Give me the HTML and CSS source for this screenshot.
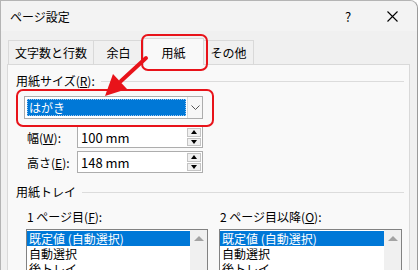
FILE: index.html
```html
<!DOCTYPE html>
<html lang="ja">
<head>
  <meta charset="UTF-8" />
  <title>ページ設定</title>
  <link rel="stylesheet" href="styles.css">
</head>
<body>

  <div class="dialog">
    <div class="titlebar">
      <span class="title">ページ設定</span>
      <span class="help">?</span>
      <span class="close">
        <svg width="11" height="11" viewBox="0 0 11 11"><path d="M0.5 0.5 L10.5 10.5 M10.5 0.5 L0.5 10.5" stroke="#000" stroke-width="1.1" fill="none" /></svg>
      </span>
    </div>

    <div class="cuerpo">
      <div class="tabs">
        <div class="tab tab_ancho">文字数と行数</div>
        <div class="tab">余白</div>
        <div class="tab activa">用紙</div>
        <div class="tab">その他</div>
      </div>

      <div class="panel">
        <div class="grupo">用紙サイズ(<u>R</u>):</div>

        <div class="combo">
          <div class="combo_valor"><span>はがき</span></div>
          <div class="combo_boton">
            <svg width="9" height="5" viewBox="0 0 9 5"><path d="M0.5 0.5 L4.5 4.5 L8.5 0.5" stroke="#555" fill="none" /></svg>
          </div>
        </div>

        <div class="fila">
          <label>幅(<u>W</u>):</label>
          <div class="entrada">
            <span>100 mm</span>
            <div class="giro">
              <div class="giro_btn"><i class="arriba"></i></div>
              <div class="giro_btn"><i class="abajo"></i></div>
            </div>
          </div>
        </div>

        <div class="fila">
          <label>高さ(<u>E</u>):</label>
          <div class="entrada">
            <span>148 mm</span>
            <div class="giro">
              <div class="giro_btn"><i class="arriba"></i></div>
              <div class="giro_btn"><i class="abajo"></i></div>
            </div>
          </div>
        </div>

        <div class="grupo grupo_bandeja">用紙トレイ</div>

        <div class="bandejas">
          <div class="bandeja">
            <div class="bandeja_titulo">1 ページ目(<u>F</u>):</div>
            <div class="lista">
              <div class="lista_items">
                <div class="item elegido">既定値 (自動選択)</div>
                <div class="item">自動選択</div>
                <div class="item">後トレイ</div>
              </div>
              <div class="barra"><i class="barra_flecha"></i></div>
            </div>
          </div>
          <div class="bandeja">
            <div class="bandeja_titulo">2 ページ目以降(<u>O</u>):</div>
            <div class="lista">
              <div class="lista_items">
                <div class="item elegido">既定値 (自動選択)</div>
                <div class="item">自動選択</div>
                <div class="item">後トレイ</div>
              </div>
              <div class="barra"><i class="barra_flecha"></i></div>
            </div>
          </div>
        </div>
      </div>
    </div>

    <svg class="marcas" width="419" height="270" viewBox="0 0 419 270">
      <rect x="142" y="35" width="65" height="35" rx="6" fill="none" stroke="#e8131a" stroke-width="2" />
      <rect x="17" y="90" width="196" height="36" rx="6" fill="none" stroke="#e8131a" stroke-width="2" />
      <line x1="146" y1="58" x2="121" y2="81" stroke="#e8131a" stroke-width="4" stroke-linecap="round" />
      <polygon points="105,96 113,74 127,89" fill="#e8131a" />
    </svg>
  </div>

</body>
</html>
```

FILE: styles.css
```css
* {
  box-sizing: border-box;
}

body {
  margin: 0;
  padding: 0;
  width: 419px;
  height: 270px;
  overflow: hidden;
  background: #ffffff;
  font-family: "Noto Sans CJK JP", "Noto Sans", sans-serif;
  font-size: 12px;
  color: #000;
}

.dialog {
  position: relative;
  width: 418px;
  height: 280px;
  background: #f0f0f0;
  border-left: 1px solid #b4b4b4;
  border-top: 1px solid #b4b4b4;
  border-right: 1px solid #9a9a9a;
  border-top-right-radius: 8px;
}

.titlebar {
  display: flex;
  align-items: center;
  height: 30px;
  padding-left: 9px;
  background: #f3f3f3;
  border-top-right-radius: 8px;
}

.title {
  flex: 1;
}

.help {
  width: 12px;
  margin-right: 33px;
  font-size: 13px;
  text-align: center;
}

.close {
  display: flex;
  margin-right: 19px;
}

.cuerpo {
  padding-left: 6px;
}

.tabs {
  display: flex;
  align-items: flex-end;
  height: 33px;
  padding-left: 1px;
}

.tab {
  display: flex;
  align-items: center;
  justify-content: center;
  width: 51px;
  height: 24px;
  margin-left: -1px;
  background: #f0f0f0;
  border: 1px solid #d9d9d9;
  border-bottom: none;
}

.tab_ancho {
  width: 86px;
  margin-left: 0;
}

.tab.activa {
  position: relative;
  z-index: 1;
  width: 61px;
  height: 27px;
  margin-bottom: -1px;
  background: #f9f9f9;
}

.panel {
  width: 403px;
  height: 220px;
  padding-left: 8px;
  background: #f9f9f9;
  border: 1px solid #d9d9d9;
}

.grupo {
  display: flex;
  align-items: center;
  margin-top: 8px;
  line-height: 16px;
}

.grupo::after {
  content: "";
  flex: 1;
  height: 1px;
  margin: 0 5px 0 6px;
  background: #dcdcdc;
}

.grupo_bandeja {
  margin-top: 11px;
}

.combo {
  display: flex;
  width: 179px;
  height: 23px;
  margin: 7px 0 0 8px;
  padding: 2px;
  background: #fff;
  border: 1px solid #adadad;
}

.combo_valor {
  flex: 1;
  display: flex;
  align-items: center;
  padding-left: 2px;
  background: #0078d7;
  color: #fff;
  outline: 1px dotted #9fc7ee;
  outline-offset: -1px;
}

.combo_boton {
  display: flex;
  align-items: center;
  justify-content: center;
  width: 15px;
  margin: -2px -2px -2px 1px;
  background: #f7f7f7;
  border-left: 1px solid #dadada;
}

.fila {
  display: flex;
  align-items: center;
  margin-top: 3px;
  padding-left: 11px;
}

.combo + .fila {
  margin-top: 7px;
}

.fila label {
  width: 50px;
}

.entrada {
  display: flex;
  align-items: center;
  width: 126px;
  height: 22px;
  padding: 1px 1px 1px 3px;
  background: #fff;
  border: 1px solid #adadad;
}

.entrada span {
  flex: 1;
  font-size: 13px;
}

.giro {
  display: flex;
  flex-direction: column;
  gap: 1px;
  width: 14px;
  height: 18px;
}

.giro_btn {
  flex: 1;
  display: flex;
  align-items: center;
  justify-content: center;
  background: #f0f0f0;
  border: 1px solid #c4c4c4;
}

.arriba,
.abajo {
  width: 0;
  height: 0;
  border-left: 3px solid transparent;
  border-right: 3px solid transparent;
}

.arriba {
  border-bottom: 4px solid #000;
}

.abajo {
  border-top: 4px solid #000;
}

.bandejas {
  display: grid;
  grid-template-columns: 182px 183px;
  gap: 11px;
  margin-top: 9px;
  padding-left: 10px;
}

.bandeja_titulo {
  padding-left: 1px;
  line-height: 16px;
}

.lista {
  display: flex;
  height: 60px;
  margin-top: 4px;
  background: #fff;
  border: 1px solid #828282;
}

.lista_items {
  flex: 1;
  padding-top: 1px;
}

.item {
  height: 15px;
  padding-left: 2px;
  line-height: 15px;
  white-space: nowrap;
}

.item.elegido {
  background: #0078d7;
  color: #fff;
}

.barra {
  display: flex;
  justify-content: center;
  width: 17px;
  padding-top: 6px;
  background: #f0f0f0;
}

.barra_flecha {
  width: 0;
  height: 0;
  border-left: 5px solid transparent;
  border-right: 5px solid transparent;
  border-bottom: 5px solid #a3a3a3;
}

.marcas {
  position: absolute;
  top: -1px;
  left: -1px;
  pointer-events: none;
  z-index: 5;
}
```
